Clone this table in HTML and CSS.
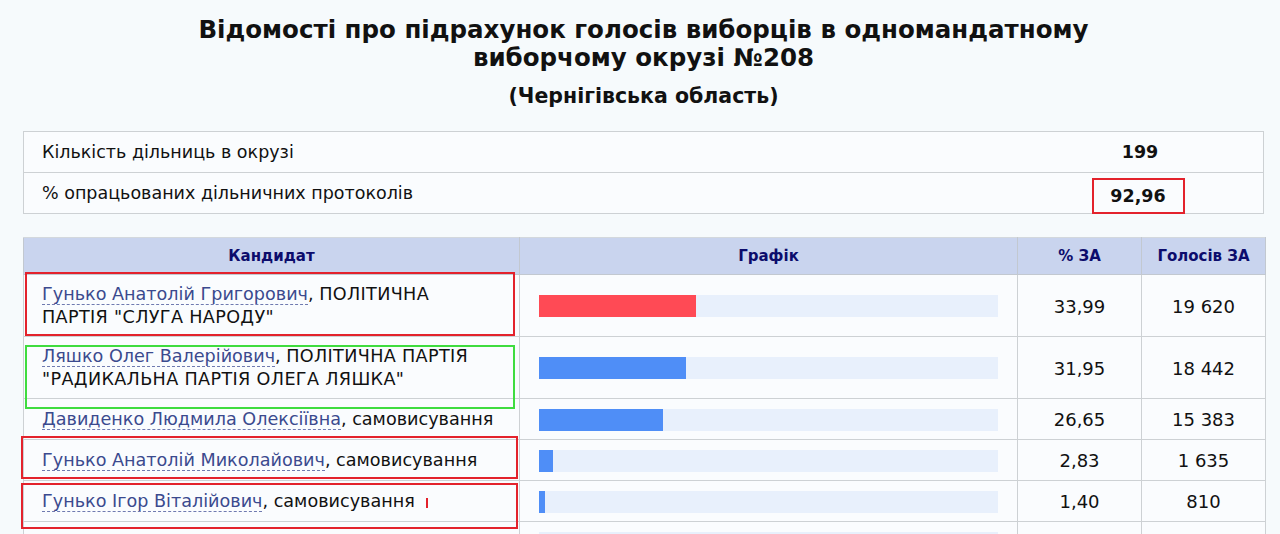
FILE: index.html
```html
<!DOCTYPE html>
<html lang="uk">
<head>
<meta charset="utf-8">
<title>Відомості про підрахунок голосів</title>
<link rel="stylesheet" href="styles.css">
</head>
<body>
<div class="page">
  <h1 class="title">Відомості про підрахунок голосів виборців в одномандатному<br>виборчому окрузі №208</h1>
  <h2 class="subtitle">(Чернігівська область)</h2>

  <div class="wrap">
    <table class="info">
      <tr><td class="label">Кількість дільниць в окрузі</td><td class="val">199</td></tr>
      <tr><td class="label">% опрацьованих дільничних протоколів</td><td class="val"><span class="mark-box">92,96</span></td></tr>
    </table>
  </div>

  <div class="wrap results-wrap">
    <table class="results">
      <colgroup>
        <col class="c-name"><col class="c-graph"><col class="c-pct"><col class="c-votes">
      </colgroup>
      <thead>
        <tr><th>Кандидат</th><th>Графік</th><th>% ЗА</th><th>Голосів ЗА</th></tr>
      </thead>
      <tbody>
        <tr>
          <td class="name"><a href="#">Гунько Анатолій Григорович</a>, <span class="party">ПОЛІТИЧНА ПАРТІЯ "СЛУГА НАРОДУ"</span></td>
          <td class="graph"><div class="track"><div class="bar red" style="width:34.2%"></div></div></td>
          <td class="num">33,99</td><td class="num">19 620</td>
        </tr>
        <tr>
          <td class="name"><a href="#">Ляшко Олег Валерійович</a>, <span class="party">ПОЛІТИЧНА ПАРТІЯ "РАДИКАЛЬНА ПАРТІЯ ОЛЕГА ЛЯШКА"</span></td>
          <td class="graph"><div class="track"><div class="bar" style="width:32.0%"></div></div></td>
          <td class="num">31,95</td><td class="num">18 442</td>
        </tr>
        <tr>
          <td class="name"><a href="#">Давиденко Людмила Олексіївна</a>, самовисування</td>
          <td class="graph"><div class="track"><div class="bar" style="width:27.0%"></div></div></td>
          <td class="num">26,65</td><td class="num">15 383</td>
        </tr>
        <tr>
          <td class="name"><a href="#">Гунько Анатолій Миколайович</a>, самовисування</td>
          <td class="graph"><div class="track"><div class="bar" style="width:3.1%"></div></div></td>
          <td class="num">2,83</td><td class="num">1 635</td>
        </tr>
        <tr>
          <td class="name"><a href="#">Гунько Ігор Віталійович</a>, самовисування<span class="tick"></span></td>
          <td class="graph"><div class="track"><div class="bar" style="width:1.3%"></div></div></td>
          <td class="num">1,40</td><td class="num">810</td>
        </tr>
        <tr>
          <td class="name">&nbsp;</td><td class="graph"><div class="track"></div></td><td class="num"></td><td class="num"></td>
        </tr>
      </tbody>
    </table>
    <div class="note note-r1"></div>
    <div class="note note-g"></div>
    <div class="note note-r2"></div>
    <div class="note note-r3"></div>
  </div>
</div>
</body>
</html>
```
FILE: styles.css
```css
html, body {
  margin: 0;
  padding: 0;
  background: #f6fafc;
  font-family: "DejaVu Sans", Verdana, sans-serif;
  color: #111;
  overflow: hidden;
}

.page {
  padding: 16px 16px 0 23px;
}

.title {
  margin: 0;
  text-align: center;
  font-size: 24.5px;
  line-height: 28px;
  font-weight: bold;
  color: #111;
}

.subtitle {
  margin: 11px 0 0 0;
  text-align: center;
  font-size: 20.5px;
  line-height: 26px;
  font-weight: bold;
  color: #111;
}

.wrap {
  position: relative;
}

.info {
  margin-top: 22px;
  width: 1241px;
  border-collapse: collapse;
  background: #fafcfe;
  border: 1px solid #cdd1d4;
}

.info td {
  height: 40px;
  padding: 0;
  font-size: 17.5px;
  border-top: 1px solid #cdd1d4;
}

.info .label {
  padding-left: 18px;
}

.info .val {
  width: 246px;
  text-align: center;
  font-weight: bold;
  font-size: 17.5px;
}

.mark-box {
  display: inline-block;
  width: 89px;
  height: 32px;
  line-height: 32px;
  border: 2px solid #e3222c;
  position: relative;
  left: -2px;
  top: 3px;
}

.results-wrap {
  margin-top: 23px;
}

.results {
  width: 1242px;
  border-collapse: collapse;
  table-layout: fixed;
  background: #fafcfe;
}

.c-name { width: 496px; }
.c-graph { width: 498px; }
.c-pct { width: 124px; }
.c-votes { width: 124px; }

.results th {
  background: #c9d4ee;
  color: #0c0c6c;
  font-size: 15px;
  font-weight: bold;
  height: 36px;
  padding: 0;
  border: 1px solid #c2c8d0;
  border-top: 1px solid #d3d8dd;
}

.results td {
  border: 1px solid #cdd1d4;
  padding: 8px 0 7px;
  height: 25px;
  font-size: 17.6px;
  line-height: 23px;
}

.results td.name {
  padding-left: 18px;
  padding-right: 20px;
}

.party {
  letter-spacing: 0.35px;
}

.results a {
  color: #3b4a8e;
  text-decoration: none;
  border-bottom: 1px dashed #6f7ab0;
}

.results td.num {
  text-align: center;
  font-size: 18px;
}

.results td.graph {
  padding-left: 19px;
  padding-right: 19px;
}

.track {
  height: 22px;
  background: #e8f0fc;
}

.bar {
  height: 22px;
  background: #4f8ef7;
}

.bar.red {
  background: #ff4a55;
}

.tick {
  display: inline-block;
  width: 2px;
  height: 10px;
  background: #e3222c;
  margin-left: 11px;
  vertical-align: -1px;
}

.note {
  position: absolute;
  border: 2px solid #e3222c;
  box-sizing: border-box;
  pointer-events: none;
}

.note-r1 { left: 2px; top: 35px; width: 490px; height: 64px; }
.note-g { left: 2px; top: 108px; width: 490px; height: 64px; border-color: #3fdc3f; }
.note-r2 { left: -2px; top: 199px; width: 497px; height: 43px; }
.note-r3 { left: -2px; top: 246px; width: 497px; height: 46px; }
```
